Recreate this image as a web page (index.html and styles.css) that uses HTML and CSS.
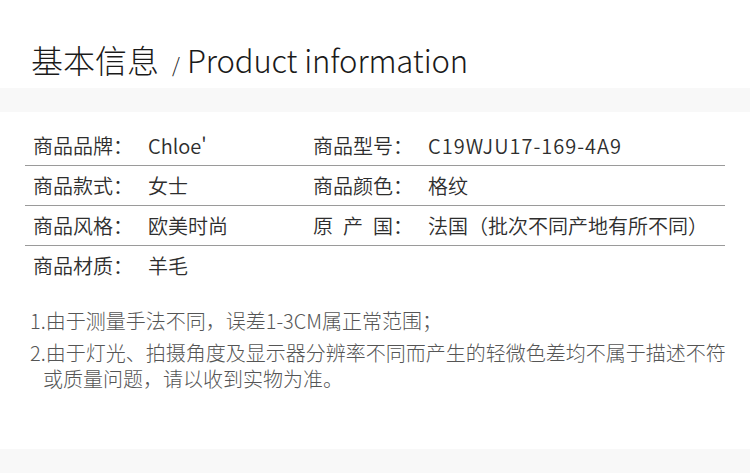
FILE: index.html
```html
<!DOCTYPE html>
<html lang="zh-CN">
<head>
<meta charset="utf-8">
<title>基本信息</title>
<link rel="stylesheet" href="styles.css">
</head>
<body>
<header class="title-bar">
  <h1 class="title"><span class="title-cn">基本信息</span><span class="title-sep">/</span><span class="title-en">Product information</span></h1>
</header>
<div class="band"></div>
<section class="info">
  <div class="row">
    <div class="cell"><span class="label">商品品牌：</span><span class="value">Chloe'</span></div>
    <div class="cell"><span class="label">商品型号：</span><span class="value code">C19WJU17-169-4A9</span></div>
  </div>
  <div class="row">
    <div class="cell"><span class="label">商品款式：</span><span class="value">女士</span></div>
    <div class="cell"><span class="label">商品颜色：</span><span class="value">格纹</span></div>
  </div>
  <div class="row">
    <div class="cell"><span class="label">商品风格：</span><span class="value">欧美时尚</span></div>
    <div class="cell"><span class="label">原&ensp;产&ensp;国：</span><span class="value">法国（批次不同产地有所不同）</span></div>
  </div>
  <div class="row last">
    <div class="cell"><span class="label">商品材质：</span><span class="value">羊毛</span></div>
    <div class="cell"></div>
  </div>
</section>
<ol class="notes">
  <li class="note">1.由于测量手法不同，误差1-3CM属正常范围；</li>
  <li class="note">2.由于灯光、拍摄角度及显示器分辨率不同而产生的轻微色差均不属于描述不符或质量问题，请以收到实物为准。</li>
</ol>
<div class="band bottom"></div>
</body>
</html>
```

FILE: styles.css
```css
html, body {
  margin: 0;
  padding: 0;
  background: #fff;
}
body {
  width: 750px;
  height: 473px;
  overflow: hidden;
  font-family: "Noto Sans CJK SC", "Noto Sans", sans-serif;
  color: #333;
  display: flex;
  flex-direction: column;
}
.title-bar {
  height: 88px;
  box-sizing: border-box;
  padding: 43px 0 0 31px;
}
.title {
  margin: 0;
  font-weight: 300;
  color: #1a1a1a;
  display: flex;
  align-items: baseline;
  line-height: 1;
}
.title-cn {
  font-size: 32px;
}
.title-sep {
  font-size: 20px;
  margin: 0 7px 0 13px;
}
.title-en {
  font-size: 31px;
  letter-spacing: -0.1px;
}
.band {
  height: 24px;
  background: #f8f8f8;
  flex: none;
}
.band.bottom {
  margin-top: auto;
}
.info {
  margin: 14px 25px 0;
}
.row {
  display: grid;
  grid-template-columns: 280px 1fr;
  height: 39px;
  align-items: center;
  border-bottom: 1px solid #9a9a9a;
}
.row.last {
  border-bottom: none;
}
.cell {
  display: flex;
  padding-left: 8px;
  font-size: 20px;
  font-weight: 350;
  line-height: 26px;
  color: #2e2e2e;
}
.label {
  width: 115px;
  flex: none;
  white-space: nowrap;
}
.value {
  white-space: nowrap;
}
.code {
  letter-spacing: 1px;
}
.notes {
  list-style: none;
  margin: 23px 20px 0 30px;
  padding: 0;
  font-size: 20px;
  font-weight: 300;
  line-height: 26px;
  color: #555;
}
.note {
  padding-left: 13px;
  text-indent: -13px;
}
.note + .note {
  margin-top: 6px;
}
```
